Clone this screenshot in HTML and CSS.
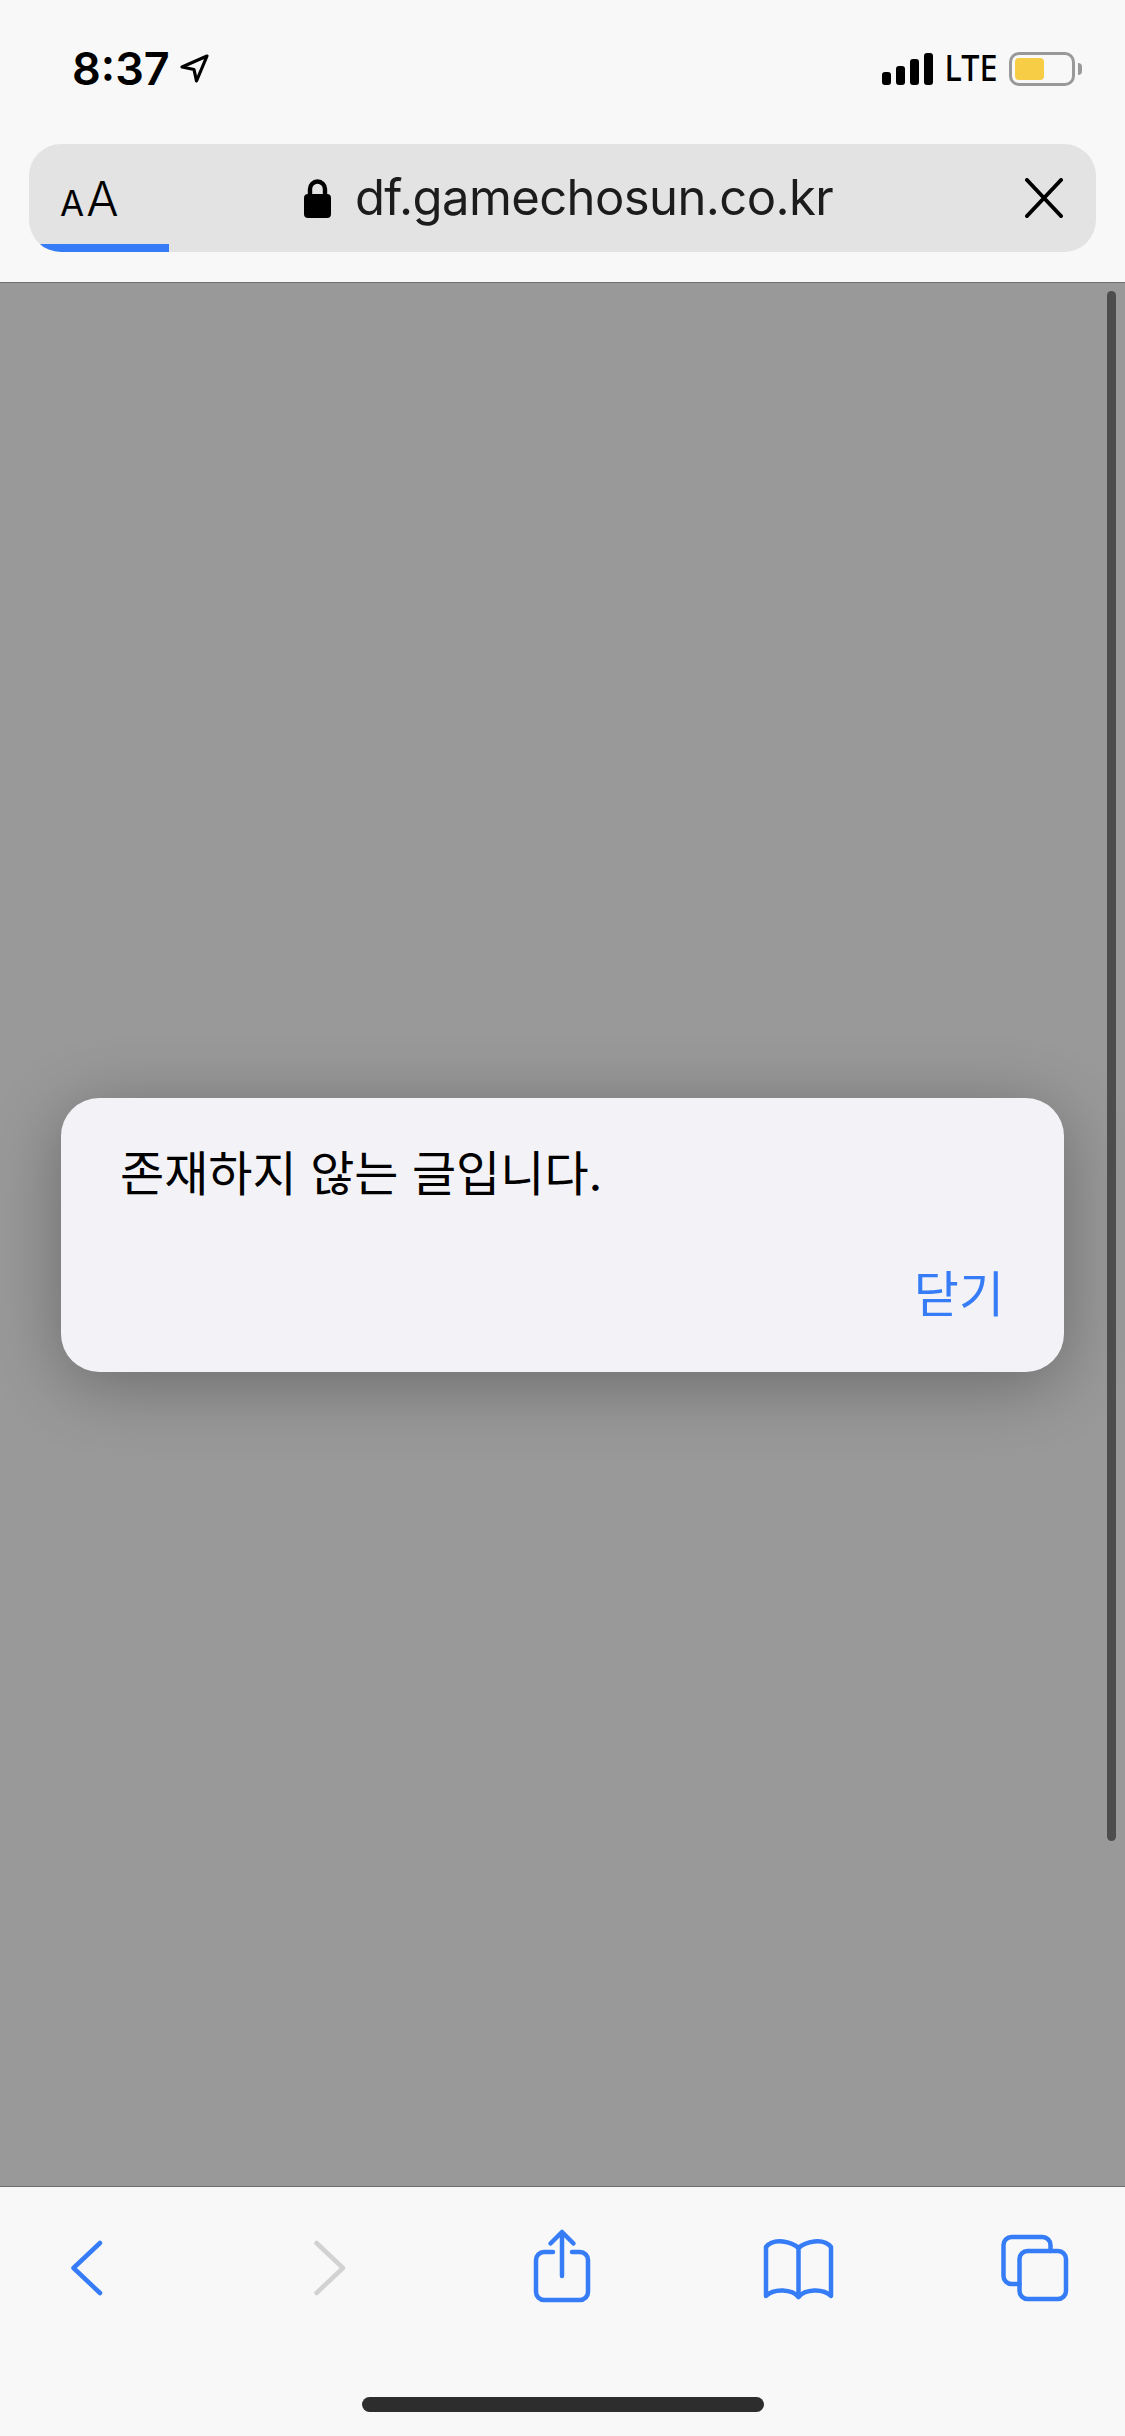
FILE: index.html
```html
<!DOCTYPE html>
<html lang="ko">
<head>
    <meta charset="UTF-8">
    <meta name="viewport" content="width=device-width, initial-scale=1.0">
    <title>df.gamechosun.co.kr</title>
    <link rel="stylesheet" href="styles.css">
</head>
<body>
    <header class="top-bar">
        <div class="status-bar">
            <div class="status-left">
                <span class="time">8:37</span>
                <svg class="location-icon" viewBox="0 0 32 32">
                    <path d="M28 3 L3 14 L15 16.5 L17.5 28 Z"/>
                </svg>
            </div>
            <div class="status-right">
                <div class="signal">
                    <span class="signal-bar bar-1"></span>
                    <span class="signal-bar bar-2"></span>
                    <span class="signal-bar bar-3"></span>
                    <span class="signal-bar bar-4"></span>
                </div>
                <span class="network">LTE</span>
                <div class="battery">
                    <div class="battery-body"><div class="battery-fill"></div></div>
                    <div class="battery-nub"></div>
                </div>
            </div>
        </div>

        <div class="address-bar">
            <div class="text-size"><span class="a-small">A</span><span class="a-big">A</span></div>
            <div class="site">
                <svg class="lock-icon" viewBox="0 0 27 39">
                    <path class="lock-shackle" d="M6 17 V10 a7.5 7.5 0 0 1 15 0 V17"/>
                    <rect y="15" width="27" height="24" rx="4"/>
                </svg>
                <span class="site-name">df.gamechosun.co.kr</span>
            </div>
            <svg class="close-icon" viewBox="0 0 38 40">
                <path d="M2 2 L36 38 M36 2 L2 38"/>
            </svg>
            <div class="progress"></div>
        </div>
    </header>

    <main class="page">
        <div class="scrollbar"></div>
        <div class="dialog">
            <p class="dialog-text">존재하지 않는 글입니다.</p>
            <div class="dialog-actions">
                <button class="dialog-btn">닫기</button>
            </div>
        </div>
    </main>

    <footer class="bottom-bar">
        <nav class="tools">
            <svg class="tool" viewBox="0 0 80 80"><path d="M54 15 L27.5 40 L54 65"/></svg>
            <svg class="tool tool-off" viewBox="0 0 80 80"><path d="M27.5 15 L54 40 L27.5 65"/></svg>
            <svg class="tool" viewBox="0 0 80 80">
                <path d="M31 24 H22 a8 8 0 0 0 -8 8 V64 a8 8 0 0 0 8 8 H58 a8 8 0 0 0 8 -8 V32 a8 8 0 0 0 -8 -8 H50"/>
                <path d="M40 4 V48 M28.5 15.5 L40 4 L51.5 15.5"/>
            </svg>
            <svg class="tool" viewBox="0 0 80 80">
                <path d="M40.5 20 C34 14 16 9 8 19 V68 C16 60 34 61 40.5 69 C47 61 65 60 73 68 V19 C65 9 47 14 40.5 20 V69"/>
            </svg>
            <svg class="tool" viewBox="0 0 80 80">
                <path d="M55.5 23 V17 a8 8 0 0 0 -8 -8 H16.5 a8 8 0 0 0 -8 8 V48 a8 8 0 0 0 8 8 H24.5"/>
                <rect x="24.5" y="23" width="46.5" height="48" rx="8"/>
            </svg>
        </nav>
        <div class="home-bar"></div>
    </footer>
</body>
</html>
```

FILE: styles.css
```css
* {
    box-sizing: border-box;
}

body {
    font-family: 'Inter', 'Noto Sans CJK KR', sans-serif;
    background-color: #999;
    margin: 0;
    padding: 0;
    height: 2436px;
    display: flex;
    flex-direction: column;
    overflow: hidden;
}

/* Barra de cima */
.top-bar {
    background-color: #f8f8f8;
    height: 283px;
    border-bottom: 1px solid #6e6e6e;
}

.status-bar {
    height: 144px;
    padding: 51px 43px 0 72px;
    display: flex;
    justify-content: space-between;
    align-items: flex-start;
}

.status-left {
    display: flex;
    align-items: center;
    gap: 9px;
    height: 36px;
}

.time {
    font-size: 45px;
    font-weight: 600;
    line-height: 36px;
    color: #000;
}

.location-icon {
    width: 32px;
    height: 32px;
    fill: none;
    stroke: #000;
    stroke-width: 3.2;
    stroke-linejoin: round;
}

.status-right {
    display: flex;
    align-items: flex-start;
}

.signal {
    display: flex;
    align-items: flex-end;
    gap: 5px;
    height: 34px;
}

.signal-bar {
    width: 9px;
    background-color: #000;
    border-radius: 3px;
}

.bar-1 { height: 13px; }
.bar-2 { height: 19px; }
.bar-3 { height: 26px; }
.bar-4 { height: 32px; }

.network {
    font-family: 'Noto Sans', sans-serif;
    font-size: 36px;
    font-weight: 500;
    line-height: 34px;
    width: 76px;
    text-align: center;
    transform: scaleX(0.9);
    color: #000;
}

.battery {
    display: flex;
    align-items: center;
    height: 35px;
}

.battery-body {
    width: 66px;
    height: 34px;
    border: 3px solid #999;
    border-radius: 10px;
    padding: 3px;
}

.battery-fill {
    width: 29px;
    height: 22px;
    background-color: #f8cd46;
    border-radius: 4px;
}

.battery-nub {
    width: 4px;
    height: 12px;
    margin-left: 3px;
    background-color: #999;
    border-radius: 0 6px 6px 0;
}

.address-bar {
    position: relative;
    overflow: hidden;
    height: 108px;
    margin: 0 29px;
    padding: 0 33px 0 31px;
    background-color: #e3e3e3;
    border-radius: 32px;
    display: flex;
    align-items: center;
    justify-content: space-between;
}

.text-size {
    display: flex;
    align-items: baseline;
    gap: 2px;
    width: 58px;
    color: #000;
}

.a-small {
    font-size: 35px;
}

.a-big {
    font-size: 48px;
    font-weight: 300;
}

.site {
    display: flex;
    align-items: center;
    gap: 24px;
    margin-right: 6px;
}

.lock-icon {
    width: 27px;
    height: 39px;
    margin-top: 1px;
}

.lock-shackle {
    fill: none;
    stroke: #000;
    stroke-width: 4.4;
}

.site-name {
    font-size: 49px;
    letter-spacing: -0.6px;
    line-height: 60px;
    color: #1c1c1c;
}

.close-icon {
    width: 38px;
    height: 40px;
    fill: none;
    stroke: #000;
    stroke-width: 4;
    stroke-linecap: round;
}

.progress {
    position: absolute;
    left: 0;
    bottom: 0;
    width: 140px;
    height: 8px;
    background-color: #367cf7;
}

/* Area da pagina com o aviso */
.page {
    position: relative;
    flex: 1;
    display: flex;
    align-items: center;
    justify-content: center;
    background-color: #999;
}

.scrollbar {
    position: absolute;
    top: 8px;
    right: 9px;
    width: 9px;
    height: 1550px;
    background-color: #4d4d4d;
    border-radius: 5px;
}

.dialog {
    width: 1003px;
    height: 274px;
    padding: 44px 60px 0 59px;
    background-color: #f2f2f7;
    border-radius: 38px;
    box-shadow: 0 12px 70px rgba(0, 0, 0, 0.3);
}

.dialog-text {
    margin: 0;
    font-size: 48px;
    line-height: 64px;
    color: #000;
}

.dialog-actions {
    display: flex;
    justify-content: flex-end;
    margin-top: 57px;
}

.dialog-btn {
    padding: 0;
    border: none;
    background: none;
    font-family: inherit;
    font-size: 49px;
    line-height: 64px;
    color: #367cf7;
    cursor: pointer;
}

/* Barra de baixo */
.bottom-bar {
    height: 250px;
    background-color: #f8f8f8;
    border-top: 1px solid #6e6e6e;
    padding: 41px 0 0 46px;
}

.tools {
    display: grid;
    grid-template-columns: 243px 233px 236px 237px 80px;
    height: 80px;
}

.tool {
    width: 80px;
    height: 80px;
    fill: none;
    stroke: #367cf7;
    stroke-width: 4.5;
    stroke-linecap: round;
    stroke-linejoin: round;
}

.tool-off {
    stroke: #d2d2d2;
}

.home-bar {
    width: 402px;
    height: 15px;
    margin: 89px 0 0 316px;
    background-color: #2d2d2d;
    border-radius: 8px;
}
```
